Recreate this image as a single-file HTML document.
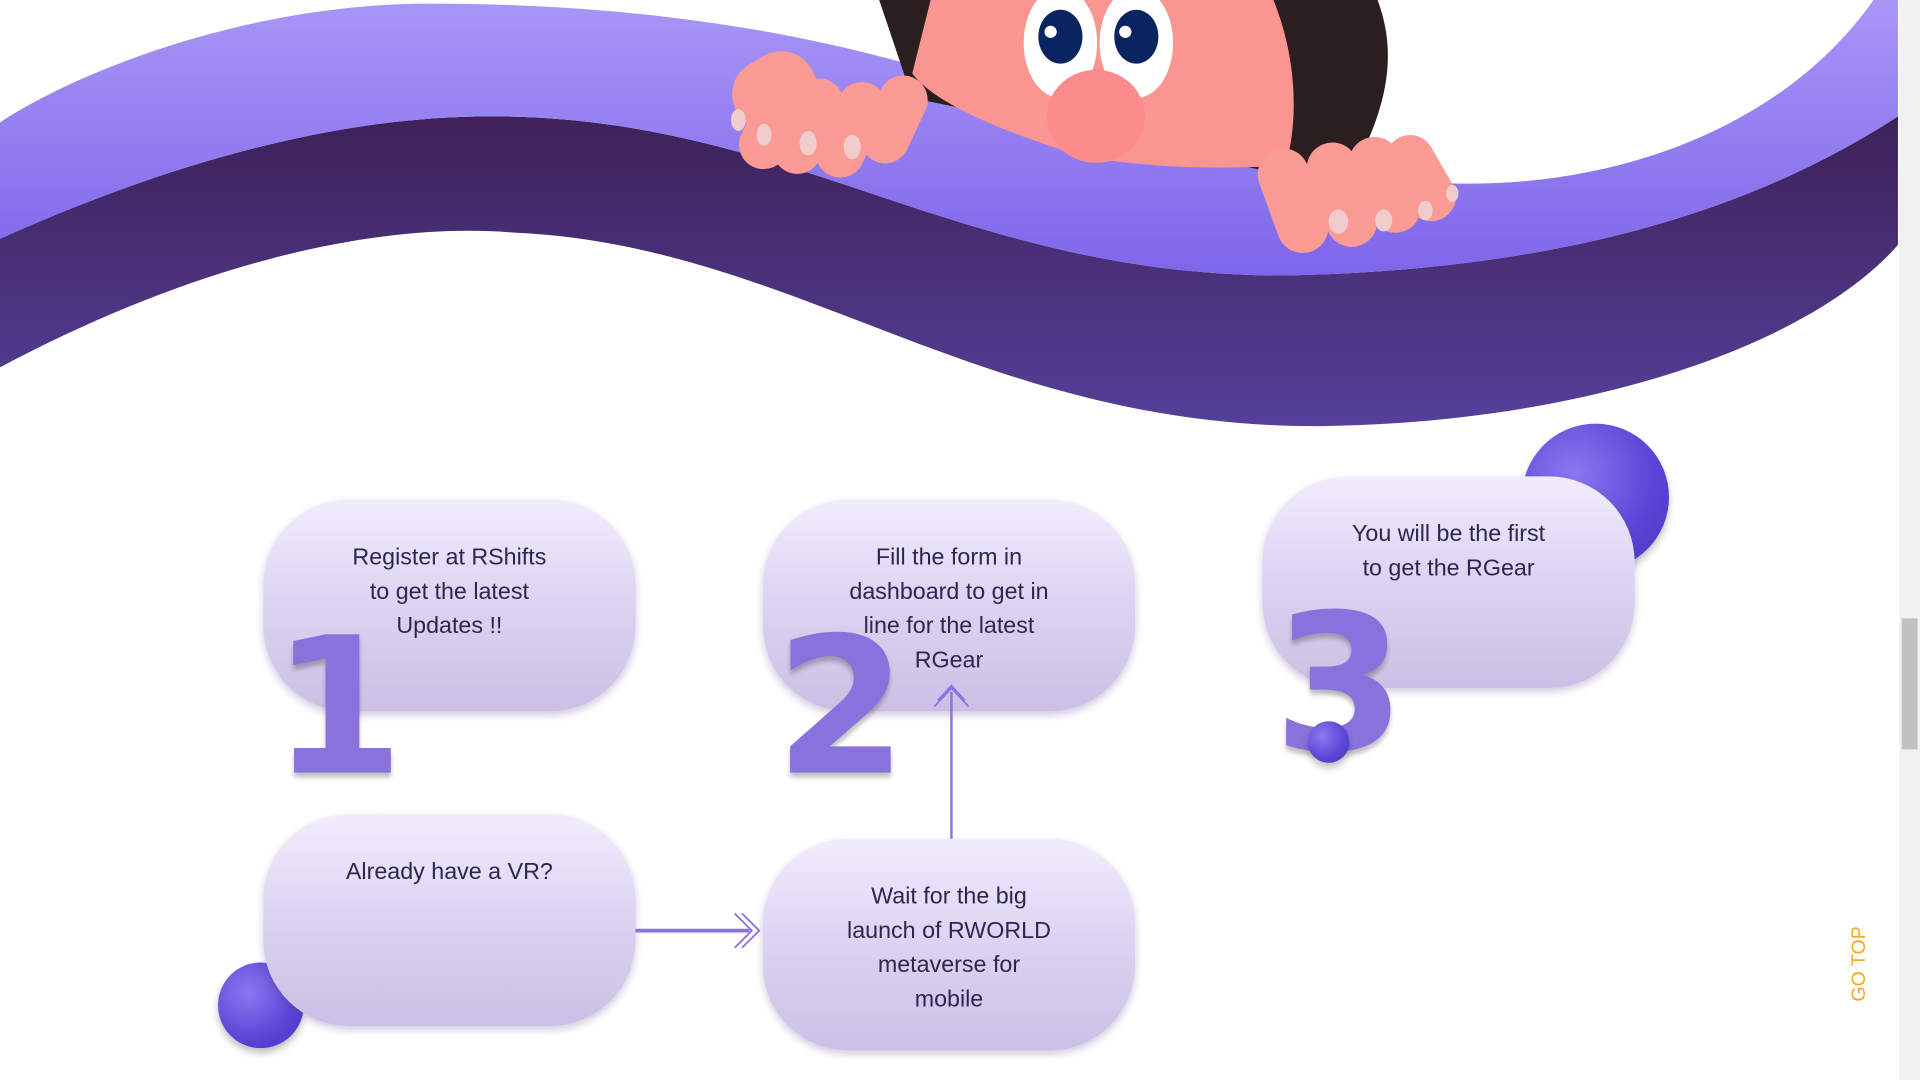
<!DOCTYPE html>
<html><head><meta charset="utf-8"><style>
html,body{margin:0;padding:0;width:1920px;height:1080px;overflow:hidden;background:#fff;font-family:"Liberation Sans",sans-serif}
#w{position:absolute;left:0;top:0;width:1568px;height:882px;transform:scale(1.22449);transform-origin:0 0}
.card{position:absolute;width:304px;height:173px;border-radius:70px;background:linear-gradient(180deg,#f1edfd 0%,#ddd5f3 45%,#cbc0e4 100%);box-shadow:0 3px 6px rgba(80,60,140,.25);color:#2d2650;font-size:19px;line-height:28px;text-align:center;box-sizing:border-box;padding-top:34px}
.num{position:absolute;color:#8a72dc;font-size:155px;font-weight:bold;line-height:1;font-family:"DejaVu Sans",sans-serif;text-shadow:0 4px 4px rgba(0,0,0,.25)}
.blob{position:absolute;border-radius:50%;background:radial-gradient(circle at 35% 35%,#8a7af0,#5a44d6 60%,#4a34c0);box-shadow:0 4px 6px rgba(0,0,0,.25)}
</style></head><body><div id="w">
<svg width="1568" height="882" style="position:absolute;left:0;top:0">
<defs>
<linearGradient id="lg" x1="0" y1="0" x2="0" y2="1"><stop offset="0" stop-color="#a896f6"/><stop offset="1" stop-color="#7d66ea"/></linearGradient>
<linearGradient id="dg" x1="0" y1="0" x2="0" y2="1"><stop offset="0" stop-color="#3e2158"/><stop offset="1" stop-color="#55409a"/></linearGradient>
</defs>
<path d="M0,300 C150,220 300,180 420,190 C650,200 800,350 1080,348 C1300,345 1480,280 1550,200 L1550,95 C1450,160 1300,220 1050,225 C780,225 650,95 400,95 C250,95 100,150 0,195 Z" fill="url(#dg)"/>
<path d="M0,195 C100,150 250,95 400,95 C650,95 780,225 1050,225 C1300,220 1450,160 1550,95 L1550,0 L1530,0 C1460,100 1330,150 1200,150 C1150,150 1100,140 1050,110 L800,70 C650,20 500,3 350,3 C200,3 60,60 0,100 Z" fill="url(#lg)"/>
<path d="M718,0 L1125,0 C1140,40 1135,80 1110,130 L1085,150 L745,80 Z" fill="#2a1e1e"/>
<path d="M760,0 L1040,0 C1060,50 1060,100 1050,135 C980,140 900,135 860,120 C800,100 760,80 745,60 Z" fill="#fa9592"/>
<ellipse cx="866" cy="35" rx="30" ry="45" fill="#fff"/><ellipse cx="928" cy="35" rx="30" ry="45" fill="#fff"/>
<ellipse cx="866" cy="30" rx="18" ry="22" fill="#0a2460"/><ellipse cx="928" cy="30" rx="18" ry="22" fill="#0a2460"/>
<circle cx="858" cy="26" r="5" fill="#fff"/><circle cx="919" cy="26" r="5" fill="#fff"/>
<ellipse cx="895" cy="95" rx="40" ry="38" fill="#fb8c8a"/>
<g fill="#fa9a95">
<rect x="598" y="45" width="70" height="60" rx="28" transform="rotate(-30 633 75)"/>
<rect x="612" y="60" width="40" height="80" rx="20" transform="rotate(25 632 100)"/>
<rect x="640" y="62" width="40" height="82" rx="20" transform="rotate(25 660 103)"/>
<rect x="675" y="65" width="40" height="82" rx="20" transform="rotate(25 695 106)"/>
<rect x="710" y="60" width="40" height="75" rx="20" transform="rotate(25 730 98)"/>
<rect x="1035" y="120" width="42" height="88" rx="21" transform="rotate(-20 1056 164)"/>
<rect x="1075" y="115" width="42" height="88" rx="21" transform="rotate(-20 1096 159)"/>
<rect x="1110" y="110" width="42" height="82" rx="21" transform="rotate(-25 1131 151)"/>
<rect x="1140" y="108" width="40" height="75" rx="20" transform="rotate(-30 1160 145)"/>
</g>
<g fill="#f1cccc"><ellipse cx="603" cy="98" rx="6" ry="9"/><ellipse cx="624" cy="110" rx="6" ry="9"/><ellipse cx="660" cy="117" rx="7" ry="10"/><ellipse cx="696" cy="120" rx="7" ry="10"/><ellipse cx="1093" cy="181" rx="8" ry="10"/><ellipse cx="1130" cy="180" rx="7" ry="9"/><ellipse cx="1164" cy="172" rx="6" ry="8"/><ellipse cx="1186" cy="158" rx="5" ry="7"/></g>
</svg>
<div class="blob" style="left:1243px;top:346px;width:120px;height:120px"></div>
<div class="blob" style="left:178px;top:786px;width:70px;height:70px"></div>
<div class="card" style="left:215px;top:408px">Register at RShifts<br>to get the latest<br>Updates !!</div>
<div class="card" style="left:623px;top:408px">Fill the form in<br>dashboard to get in<br>line for the latest<br>RGear</div>
<div class="card" style="left:1031px;top:389px">You will be the first<br>to get the RGear</div>
<div class="card" style="left:215px;top:665px">Already have a VR?</div>
<div class="card" style="left:623px;top:685px">Wait for the big<br>launch of RWORLD<br>metaverse for<br>mobile</div>
<svg width="1568" height="882" style="position:absolute;left:0;top:0">
<line x1="777" y1="565" x2="777" y2="685" stroke="#8a72e6" stroke-width="2"/>
<path d="M763,577 L777,562 L791,577 M766,572 L777,560 L788,572" stroke="#8a72e6" stroke-width="1.5" fill="none"/>
<line x1="519" y1="760" x2="612" y2="760" stroke="#8a72e6" stroke-width="3"/>
<path d="M600,746 L614,760 L600,774 M606,746 L620,760 L606,774" stroke="#8a72e6" stroke-width="1.5" fill="none"/>
</svg>
<div class="num" style="left:222px;top:500px">1</div>
<div class="num" style="left:633px;top:500px">2</div>
<div class="num" style="left:1040px;top:481px">3</div>
<div class="blob" style="left:1068px;top:589px;width:34px;height:34px"></div>
<div style="position:absolute;left:1510px;top:818px;transform:rotate(-90deg);transform-origin:0 0;color:#f5a623;font-size:16px;white-space:nowrap">GO TOP</div>
<div style="position:absolute;left:1551px;top:0;width:17px;height:882px;background:#f1f1f1"></div>
<div style="position:absolute;left:1553px;top:505px;width:13px;height:107px;background:#c1c1c1"></div>
</div></body></html>
